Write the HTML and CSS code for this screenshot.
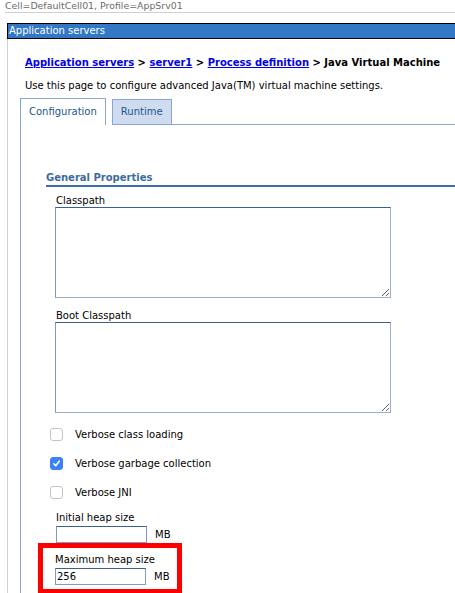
FILE: index.html
```html
<!DOCTYPE html>
<html>
<head>
<meta charset="utf-8">
<link rel="stylesheet" href="styles.css">
</head>
<body>
<div class="context">Cell=DefaultCell01, Profile=AppSrv01</div>
<div class="portlet">
  <div class="portlet-title">Application servers</div>
  <div class="portlet-body">
    <div class="breadcrumb"><a href="#">Application servers</a> &gt; <a href="#">server1</a> &gt; <a href="#">Process definition</a> &gt; Java Virtual Machine</div>
    <p class="desc">Use this page to configure advanced Java(TM) virtual machine settings.</p>
    <div class="tabs">
      <div class="tab active">Configuration</div>
      <div class="tab">Runtime</div>
      <div class="tab-fill"></div>
    </div>
    <div class="tab-content">
      <div class="section">
        <h3 class="section-title">General Properties</h3>
        <div class="field">
          <label class="lbl">Classpath</label>
          <textarea class="area"></textarea>
        </div>
        <div class="field">
          <label class="lbl">Boot Classpath</label>
          <textarea class="area"></textarea>
        </div>
        <div class="checks">
          <div class="check-row"><span class="box"></span><span>Verbose class loading</span></div>
          <div class="check-row"><span class="box checked"><svg width="9" height="9" viewBox="0 0 9 9"><path d="M1.8 4.8 L3.7 6.7 L7.2 2.2" fill="none" stroke="#fff" stroke-width="1.6" stroke-linecap="round" stroke-linejoin="round"/></svg></span><span>Verbose garbage collection</span></div>
          <div class="check-row"><span class="box"></span><span>Verbose JNI</span></div>
        </div>
        <div class="heap">
          <label class="lbl">Initial heap size</label>
          <div class="heap-row"><input class="num" type="text" value=""><span class="unit">MB</span></div>
        </div>
        <div class="heap highlight">
          <label class="lbl">Maximum heap size</label>
          <div class="heap-row"><input class="num" type="text" value="256"><span class="unit">MB</span></div>
        </div>
      </div>
    </div>
  </div>
</div>
</body>
</html>
```
FILE: styles.css
```css
html, body {
  margin: 0;
  padding: 0;
  background: #fff;
  overflow: hidden;
  height: 593px;
}
body {
  font-family: "DejaVu Sans", Verdana, sans-serif;
  font-size: 10px;
  color: #000;
}
.context {
  margin-left: 5px;
  color: #6b6b6b;
  font-size: 9.4px;
  line-height: 11px;
  height: 12px;
  border-bottom: 1px solid #cfcfcf;
}
.portlet {
  margin-top: 10px;
  margin-left: 7px;
  width: 520px;
}
.portlet-title {
  background: #3378c5;
  border: 1px solid #000;
  color: #fff;
  font-size: 10px;
  line-height: 14px;
  height: 14px;
  padding-left: 1px;
}
.portlet-body {
  border-left: 1px solid #cfcfcf;
  padding-top: 17px;
}
.breadcrumb {
  margin-left: 17px;
  font-weight: bold;
  font-size: 10px;
  line-height: 14px;
}
.breadcrumb a {
  color: #0000ee;
}
.desc {
  margin: 9px 0 0 17px;
  font-size: 10px;
  line-height: 14px;
}
.tabs {
  display: flex;
  align-items: flex-end;
  margin-top: 6px;
  margin-left: 12px;
  height: 26px;
}
.tab {
  border: 1px solid #8ba6d2;
  border-bottom: none;
  color: #1b5790;
  font-size: 10px;
  padding: 0 8px;
  line-height: 24px;
}
.tab.active {
  height: 26px;
  line-height: 25px;
  background: #fff;
}
.tab:not(.active) {
  margin-left: 6px;
  background: #cfdbee;
  border-bottom: 1px solid #8ba6d2;
  height: 24px;
}
.tab-fill {
  flex: 1;
  border-bottom: 1px solid #8ba6d2;
}
.tab-content {
  margin-left: 12px;
  border-left: 1px solid #8ba6d2;
  padding-top: 46px;
}
.section {
  margin-left: 25px;
}
.section-title {
  margin: 0;
  font-size: 10px;
  font-weight: bold;
  color: #3d6c9c;
  line-height: 13px;
  border-bottom: 2px solid #3a6ea6;
  padding-bottom: 1px;
}
.field {
  margin-left: 10px;
  margin-top: 8px;
  display: flex;
  flex-direction: column;
  align-items: flex-start;
}
.field + .field {
  margin-top: 12px;
}
.lbl {
  font-size: 10px;
  line-height: 12px;
}
.area {
  margin: 0 0 0 -1px;
  width: 334px;
  height: 89px;
  border: 1px solid #99afcb;
  border-top-color: #3a6090;
  border-left-color: #7f9bc0;
  padding: 0;
  resize: both;
}
.checks {
  margin-top: 7px;
}
.check-row {
  display: flex;
  align-items: center;
  gap: 12px;
  margin-left: 4px;
  height: 29px;
  font-size: 10px;
}
.box {
  width: 11px;
  height: 11px;
  border: 1px solid #c4c4c4;
  border-radius: 3px;
  background: #fff;
  display: flex;
  align-items: center;
  justify-content: center;
}
.box.checked {
  background: #3b82f6;
  border-color: #3b82f6;
}
.heap {
  margin-left: 10px;
  margin-top: 5px;
}
.heap-row {
  display: flex;
  align-items: center;
  gap: 8px;
  margin-top: 2px;
}
.num {
  width: 87px;
  height: 15px;
  padding: 0 1px;
  margin: 0;
  border: 1px solid #7f9bc0;
  border-top-color: #3a6090;
  font-family: "DejaVu Sans", Verdana, sans-serif;
  font-size: 10px;
  outline: none;
}
.unit {
  font-size: 10px;
}
.highlight {
  margin: 0 0 0 -8px;
  width: 122px;
  border: 5px solid #ff0000;
  padding: 6px 0 4px 12px;
}
```
